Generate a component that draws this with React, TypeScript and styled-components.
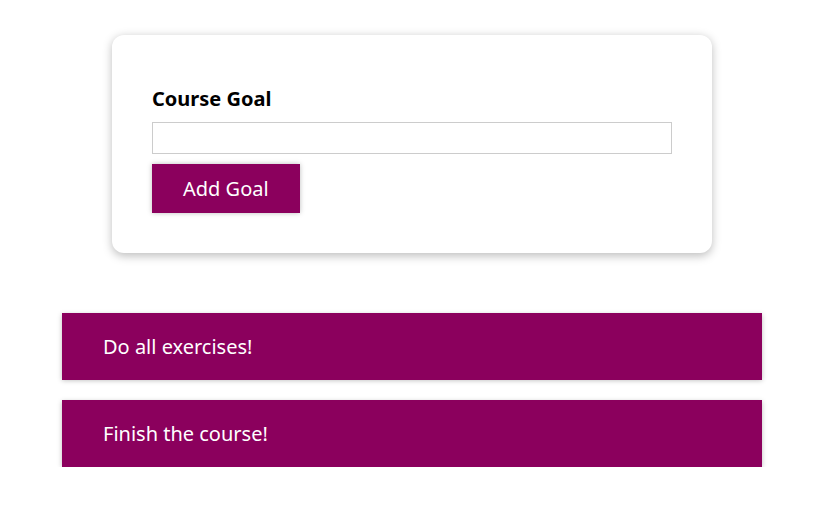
import React from "react";
import styled, { createGlobalStyle } from "styled-components";

const Global = createGlobalStyle`
  * { box-sizing: border-box; }
  html { font-size: 20px; }
  body {
    margin: 0;
    font-family: "Noto Sans", "Noto Sans CJK KR", sans-serif;
    line-height: 27px;
    background: #ffffff;
  }
`;

const Page = styled.main`
  display: flex;
  flex-direction: column;
  align-items: center;
  padding: 35px 0 0 2px;
`;

const FormCard = styled.section`
  width: 600px;
  padding: 2rem;
  border-radius: 12px;
  background: #fff;
  box-shadow: 0 2.5px 10px rgba(0, 0, 0, 0.26);
`;

const FormControl = styled.div`
  margin: 0.5rem 0;
`;

const Label = styled.label`
  display: block;
  font-weight: bold;
  margin-bottom: 0.5rem;
  color: #000;
  padding-top: 1px;
  line-height: 26px;
`;

const Input = styled.input`
  display: block;
  width: 100%;
  border: 1px solid #ccc;
  font: inherit;
  line-height: 1.5rem;
  padding: 0 0.25rem;
  outline: none;
`;

const Button = styled.button`
  font: inherit;
  line-height: 27px;
  padding: 0.5rem 1.5rem;
  border: 1px solid #8b005d;
  color: white;
  background: #8b005d;
  box-shadow: 0 0 5px rgba(0, 0, 0, 0.26);
  cursor: pointer;
`;

const GoalList = styled.ul`
  list-style: none;
  margin: 60px 0 0;
  padding: 0;
  width: 700px;
  display: flex;
  flex-direction: column;
  gap: 1rem;
`;

const GoalItem = styled.li`
  background: #8b005d;
  box-shadow: 0 1.25px 5px rgba(0, 0, 0, 0.26);
  color: white;
  padding: 1rem 2rem 1rem 41px;
  cursor: pointer;
`;

export default function App() {
  return (
    <>
      <Global />
      <Page>
        <FormCard>
          <form onSubmit={(e) => e.preventDefault()}>
            <FormControl>
              <Label>Course Goal</Label>
              <Input type="text" />
            </FormControl>
            <Button type="submit">Add Goal</Button>
          </form>
        </FormCard>
        <GoalList>
          <GoalItem>Do all exercises!</GoalItem>
          <GoalItem>Finish the course!</GoalItem>
        </GoalList>
      </Page>
    </>
  );
}
